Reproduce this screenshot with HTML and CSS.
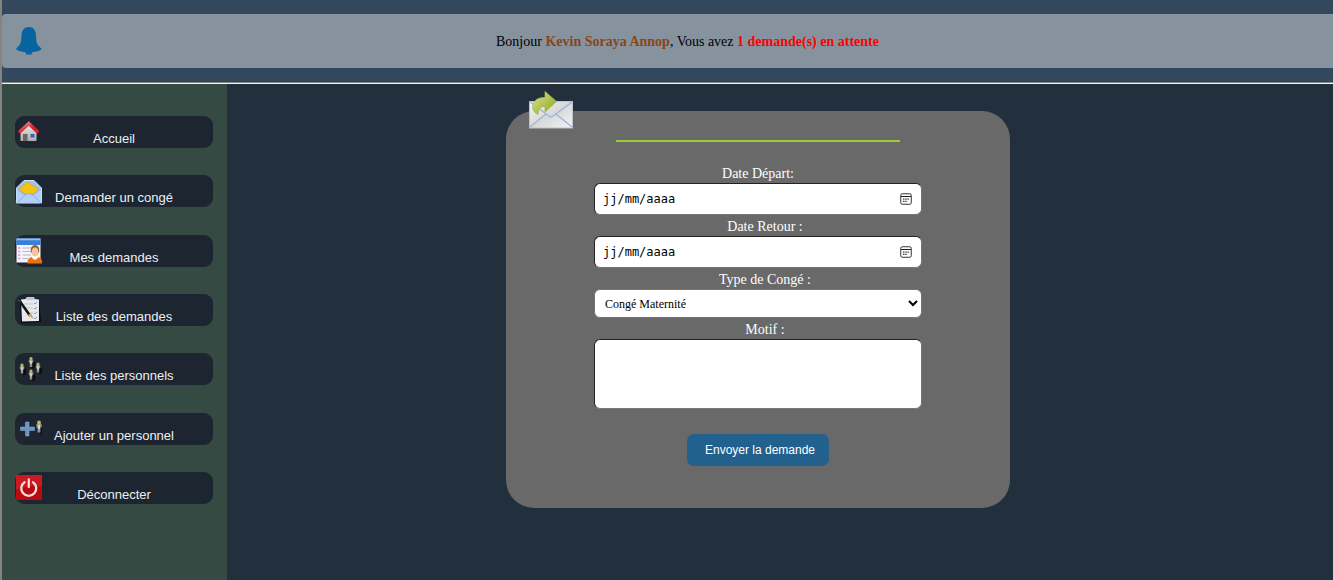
FILE: index.html
```html
<!DOCTYPE html>
<html lang="fr">
<head>
<meta charset="utf-8">
<title>Demander un congé</title>
<link rel="stylesheet" href="styles.css">
</head>
<body>
<header class="topbar">
  <div class="notice">
    <svg class="bell" viewBox="0 0 26 28" aria-hidden="true">
      <path d="M13 0C8.500 0 6 3 5.600 7.500C5.200 12.500 5.300 16 2.800 19L.2 21.500C0 23.500 4 24.500 9.500 25.200L10 27.500H15.500L16 25.200C21 24.500 26 23.500 25.400 21.500L22.700 19C20 16 20.300 12.500 20 7.500C19.600 3 17.200 0 13 0Z" fill="#08649f"/>
    </svg>
    <p class="greeting">Bonjour <b class="user">Kevin Soraya Annop</b>, Vous avez <b class="pending">1 demande(s) en attente</b></p>
  </div>
</header>
<div class="layout">
  <nav class="sidebar">
    <button class="item" type="button">
      <svg class="icon" viewBox="0 0 26 26" aria-hidden="true">
        <defs><linearGradient id="roof" x2="1" y2="1"><stop stop-color="#ff8a8a"/><stop offset=".6" stop-color="#d81f2a"/></linearGradient>
        <linearGradient id="wall" x2="0" y2="1"><stop stop-color="#eee"/><stop offset="1" stop-color="#aaa"/></linearGradient></defs>
        <path d="M4.500 12L13 4L20.500 12V22H4.500Z" fill="url(#wall)"/>
        <rect x="7" y="15" width="4.500" height="7" fill="#6d675b"/>
        <rect x="14" y="14.500" width="5" height="4.500" fill="#3c68ac" stroke="#dde" stroke-width=".6"/>
        <path d="M4 12.500L12.800 4.500L21.200 12.500" fill="none" stroke="url(#roof)" stroke-width="3.400" stroke-linecap="round"/>
      </svg>
      Accueil
    </button>
    <button class="item" type="button">
      <svg class="icon" viewBox="0 0 26 26" aria-hidden="true">
        <path d="M.5 10L8 2.500H18L25.500 10V25H.5Z" fill="#9fc4f3" stroke="#cfe2fb"/>
        <path d="M3 10.500L11.500 4L22.500 11L18 16H8.500Z" fill="#f3c512" stroke="#d9a313" stroke-width=".6"/>
        <path d="M.7 11L9 17L13 15L17 17L25.300 11V25H.7Z" fill="#b0d0f7"/>
        <path d="M1 25L9 17.200Q13 14 17 17.200L25 25M1 11L9 17.200M25 11L17 17.200" fill="none" stroke="#8bb4e8"/>
      </svg>
      Demander un congé
    </button>
    <button class="item" type="button">
      <svg class="icon" viewBox="0 0 26 26" aria-hidden="true">
        <rect width="24" height="24" x=".5" y=".5" fill="#f5f3fb"/>
        <rect width="24" height="6.500" x=".5" y=".5" fill="#3b80d8"/>
        <path d="M1 1.500H24" stroke="#8dbcf5" stroke-width="1.500"/>
        <path d="M2 10H4.500M2 13.500H4.500M2 17H4.500M2 20.500H4.500" stroke="#df9be2" stroke-width="1.500"/>
        <path d="M6.500 10H22M6.500 13.500H15M6.500 17H15M6.500 20.500H12" stroke="#b8b8c4"/>
        <path d="M11.500 25.500Q11 20 16 19H22Q27 20 26 25.500Z" fill="#ee7208"/>
        <path d="M16.500 17H21.500L22 20L19 22L16 20Z" fill="#fff"/>
        <ellipse cx="19" cy="12" rx="4.300" ry="5" fill="#9a602f"/>
        <ellipse cx="19" cy="14" rx="3.300" ry="4.500" fill="#f0c6a0"/>
      </svg>
      Mes demandes
    </button>
    <button class="item" type="button">
      <svg class="icon" viewBox="0 0 26 26" aria-hidden="true">
        <path d="M4 3L23 2L25 25L5 26Z" fill="#08090b"/>
        <path d="M5 2.500L9.500 2L11 0H18L18.500 2L23 2.500V24L6 24.500Z" fill="#e8e8ec"/>
        <path d="M11 0H18L18.500 3H10.500Z" fill="#c3c6ca"/>
        <path d="M8 7H17M8 11H17M12 16H17M14 20H18" stroke="#c4c7cd"/>
        <path d="M18 6l1 1 2-2M18 11l1 1 2-2M18 16l1 1 2-2M18 21l1 1 2-2" fill="none" stroke="#6ba3dc"/>
        <path d="M3 3L13.500 18" stroke="#111418" stroke-width="2.600" stroke-linecap="round"/>
        <path d="M2 2.500L4 5" stroke="#4a4140" stroke-width="2"/>
        <path d="M12 18L15 16L17.500 22Z" fill="#d7a64c"/>
      </svg>
      Liste des demandes
    </button>
    <button class="item" type="button">
      <svg class="icon" viewBox="0 0 26 26" aria-hidden="true">
        <defs><g id="person"><path d="M0 3L4 3L4.500 8L2 10L0 8Z" fill="#07090b" opacity=".8"/><path d="M-2.200 1Q0-.5 2.200 1V3.500L1.200 4V8H-1.200V4L-2.200 3.500Z" fill="#92958e"/><path d="M0 1.500V5" stroke="#f2f2ea" stroke-width="1.200"/><circle cy="-.4" r="1.600" fill="#c9b25c"/></g></defs>
        <use href="#person" x="15" y="3"/><use href="#person" x="6" y="9.500"/><use href="#person" x="22" y="8.500"/><use href="#person" x="15" y="15.500"/>
      </svg>
      Liste des personnels
    </button>
    <button class="item" type="button">
      <svg class="icon" viewBox="0 0 26 26" aria-hidden="true">
        <path d="M9.500 6h3.500v5h5.500v3.500h-5.500v5.500h-3.500v-5.500h-5v-3.500h5Z" fill="#6d93c2" stroke="#8bb0d8" stroke-width=".5"/>
        <g transform="translate(23 7) scale(1.200)"><use href="#person"/></g>
      </svg>
      Ajouter un personnel
    </button>
    <button class="item" type="button">
      <svg class="icon" viewBox="0 0 26 26" aria-hidden="true">
        <rect width="26" height="25" rx="1" fill="#b90a10"/>
        <path d="M0 0H26V12Q13 9 0 15Z" fill="#c81a20"/>
        <path d="M8.500 7.200A7.500 7.500 0 1 0 17 7.200M12.800 4.500V12" fill="none" stroke="#f3dcdc" stroke-width="2.300" stroke-linecap="round"/>
      </svg>
      Déconnecter
    </button>
  </nav>
  <main class="content">
    <form class="card">
      <svg class="mail" viewBox="0 0 44 38" aria-hidden="true">
        <defs><linearGradient id="paper" x2="1" y2="1"><stop stop-color="#f4f5f6"/><stop offset=".5" stop-color="#d6d8da"/><stop offset="1" stop-color="#f2f4f6"/></linearGradient>
        <linearGradient id="arrow" x2="1" y2="1"><stop stop-color="#dbe69a"/><stop offset="1" stop-color="#88a30e"/></linearGradient></defs>
        <rect x=".5" y="10.500" width="43" height="26.500" fill="url(#paper)" stroke="#bfc3c6"/>
        <path d="M1 36L17 23M43 36L27 23M1 11L20 25Q22 26.500 24 25L43 11" fill="none" stroke="#9bb7d3" stroke-width="1.300"/>
        <path d="M16 .5L27.500 10.500L16 21V15.500Q9 15 9 23.500Q2 20 4 13Q7 6 16 6.500Z" fill="url(#arrow)" stroke="#a5b945" stroke-width=".8"/>
      </svg>
      <hr class="rule">
      <label class="label" for="depart">Date Départ:</label>
      <div class="date">
        <input class="field" id="depart" type="text" placeholder="jj/mm/aaaa">
        <button class="picker" type="button" aria-label="Choisir la date de départ">
          <svg class="calendar" viewBox="0 0 12 12" aria-hidden="true"><rect x=".75" y=".75" width="10.500" height="10.500" rx="1.500" fill="none" stroke="#333"/><path d="M1 3.500H11" stroke="#222"/><path d="M3 6.200H9.200M3 8.300H7.500" stroke="#444" stroke-width="1.300" stroke-dasharray="1.500 .7"/></svg>
        </button>
      </div>
      <label class="label label-spaced" for="retour">Date Retour :</label>
      <div class="date">
        <input class="field" id="retour" type="text" placeholder="jj/mm/aaaa">
        <button class="picker" type="button" aria-label="Choisir la date de retour">
          <svg class="calendar" viewBox="0 0 12 12" aria-hidden="true"><rect x=".75" y=".75" width="10.500" height="10.500" rx="1.500" fill="none" stroke="#333"/><path d="M1 3.500H11" stroke="#222"/><path d="M3 6.200H9.200M3 8.300H7.500" stroke="#444" stroke-width="1.300" stroke-dasharray="1.500 .7"/></svg>
        </button>
      </div>
      <label class="label label-spaced" for="type">Type de Congé :</label>
      <select class="field choice" id="type"><option>Congé Maternité</option></select>
      <label class="label label-spaced" for="motif">Motif :</label>
      <textarea class="field motif" id="motif"></textarea>
      <button class="submit" type="submit">Envoyer la demande</button>
    </form>
  </main>
</div>
</body>
</html>
```

FILE: styles.css
```css
* {
  box-sizing: border-box;
}

body {
  margin: 0;
  min-height: 100vh;
  display: flex;
  flex-direction: column;
  border-left: 2px solid #85827f;
  background: #222f3c;
  font-family: "Liberation Serif", "Times New Roman", serif;
  font-size: 14px;
}

.topbar {
  padding: 14px 0 15px;
  background: #33485d;
  border-bottom: 1px solid #f4f4f4;
  box-shadow: inset 0 -1px #858585;
}

.notice {
  display: flex;
  align-items: center;
  height: 54px;
  padding-left: 14px;
  border-radius: 4px 0 0 4px;
  background: #86929e;
}

.bell {
  width: 26px;
  height: 28px;
}

.greeting {
  flex: 1;
  margin: 0;
  padding-top: 2px;
  text-align: center;
}

.user {
  color: #8b4513;
}

.pending {
  color: #f00;
}

.layout {
  flex: 1;
  display: flex;
}

.sidebar {
  display: flex;
  flex-direction: column;
  justify-content: space-between;
  gap: 16px;
  width: 225px;
  padding: 32px 14px 76px 13px;
  background: #354a42;
}

.item {
  position: relative;
  height: 32px;
  padding: 12px 0 0;
  border: 0;
  border-radius: 9px;
  background: #1d2630;
  color: #eceff1;
  font: 13px/22px "Liberation Sans", Arial, sans-serif;
  text-align: center;
}

.icon {
  position: absolute;
  left: 1px;
  top: 3px;
  width: 26px;
  height: 26px;
}

.content {
  flex: 1;
  display: flex;
  justify-content: center;
  align-items: flex-start;
  padding: 27px 44px 27px 0;
}

.card {
  position: relative;
  display: flex;
  flex-direction: column;
  align-items: center;
  width: 504px;
  padding: 29px 88px 42px;
  border-radius: 28px;
  background: #696969;
}

.mail {
  position: absolute;
  left: 23px;
  top: -20px;
  width: 44px;
  height: 38px;
}

.rule {
  width: 284px;
  height: 2px;
  margin: 0 0 20px;
  border: 0;
  background: #9acd32;
}

.label {
  padding-top: 3px;
  color: #fff;
  line-height: 18px;
}

.label-spaced {
  padding-left: 14px;
}

.field {
  display: block;
  width: 100%;
  height: 32px;
  margin: 0;
  padding: 0 8px;
  border: 1px solid #767676;
  border-top-color: #222;
  border-left-color: #222;
  border-radius: 6px;
  background: #fff;
  color: #000;
  font: 12px "DejaVu Sans Mono", monospace;
}

.field::placeholder {
  color: #000;
  opacity: 1;
}

.date {
  position: relative;
  width: 100%;
}

.picker {
  position: absolute;
  right: 10px;
  top: 10px;
  padding: 0;
  border: 0;
  background: none;
}

.calendar {
  display: block;
  width: 12px;
  height: 12px;
}

.choice {
  height: 29px;
  padding: 0 0 0 6px;
  border-color: #767676;
  font: 12px "Liberation Serif", "Times New Roman", serif;
}

.motif {
  height: 70px;
  padding: 8px;
  resize: none;
}

.submit {
  height: 32px;
  margin-top: 25px;
  padding: 0 14px 0 18px;
  border: 0;
  border-radius: 7px;
  background: #22618d;
  color: #fff;
  font: 12px "Liberation Sans", Arial, sans-serif;
}
```
